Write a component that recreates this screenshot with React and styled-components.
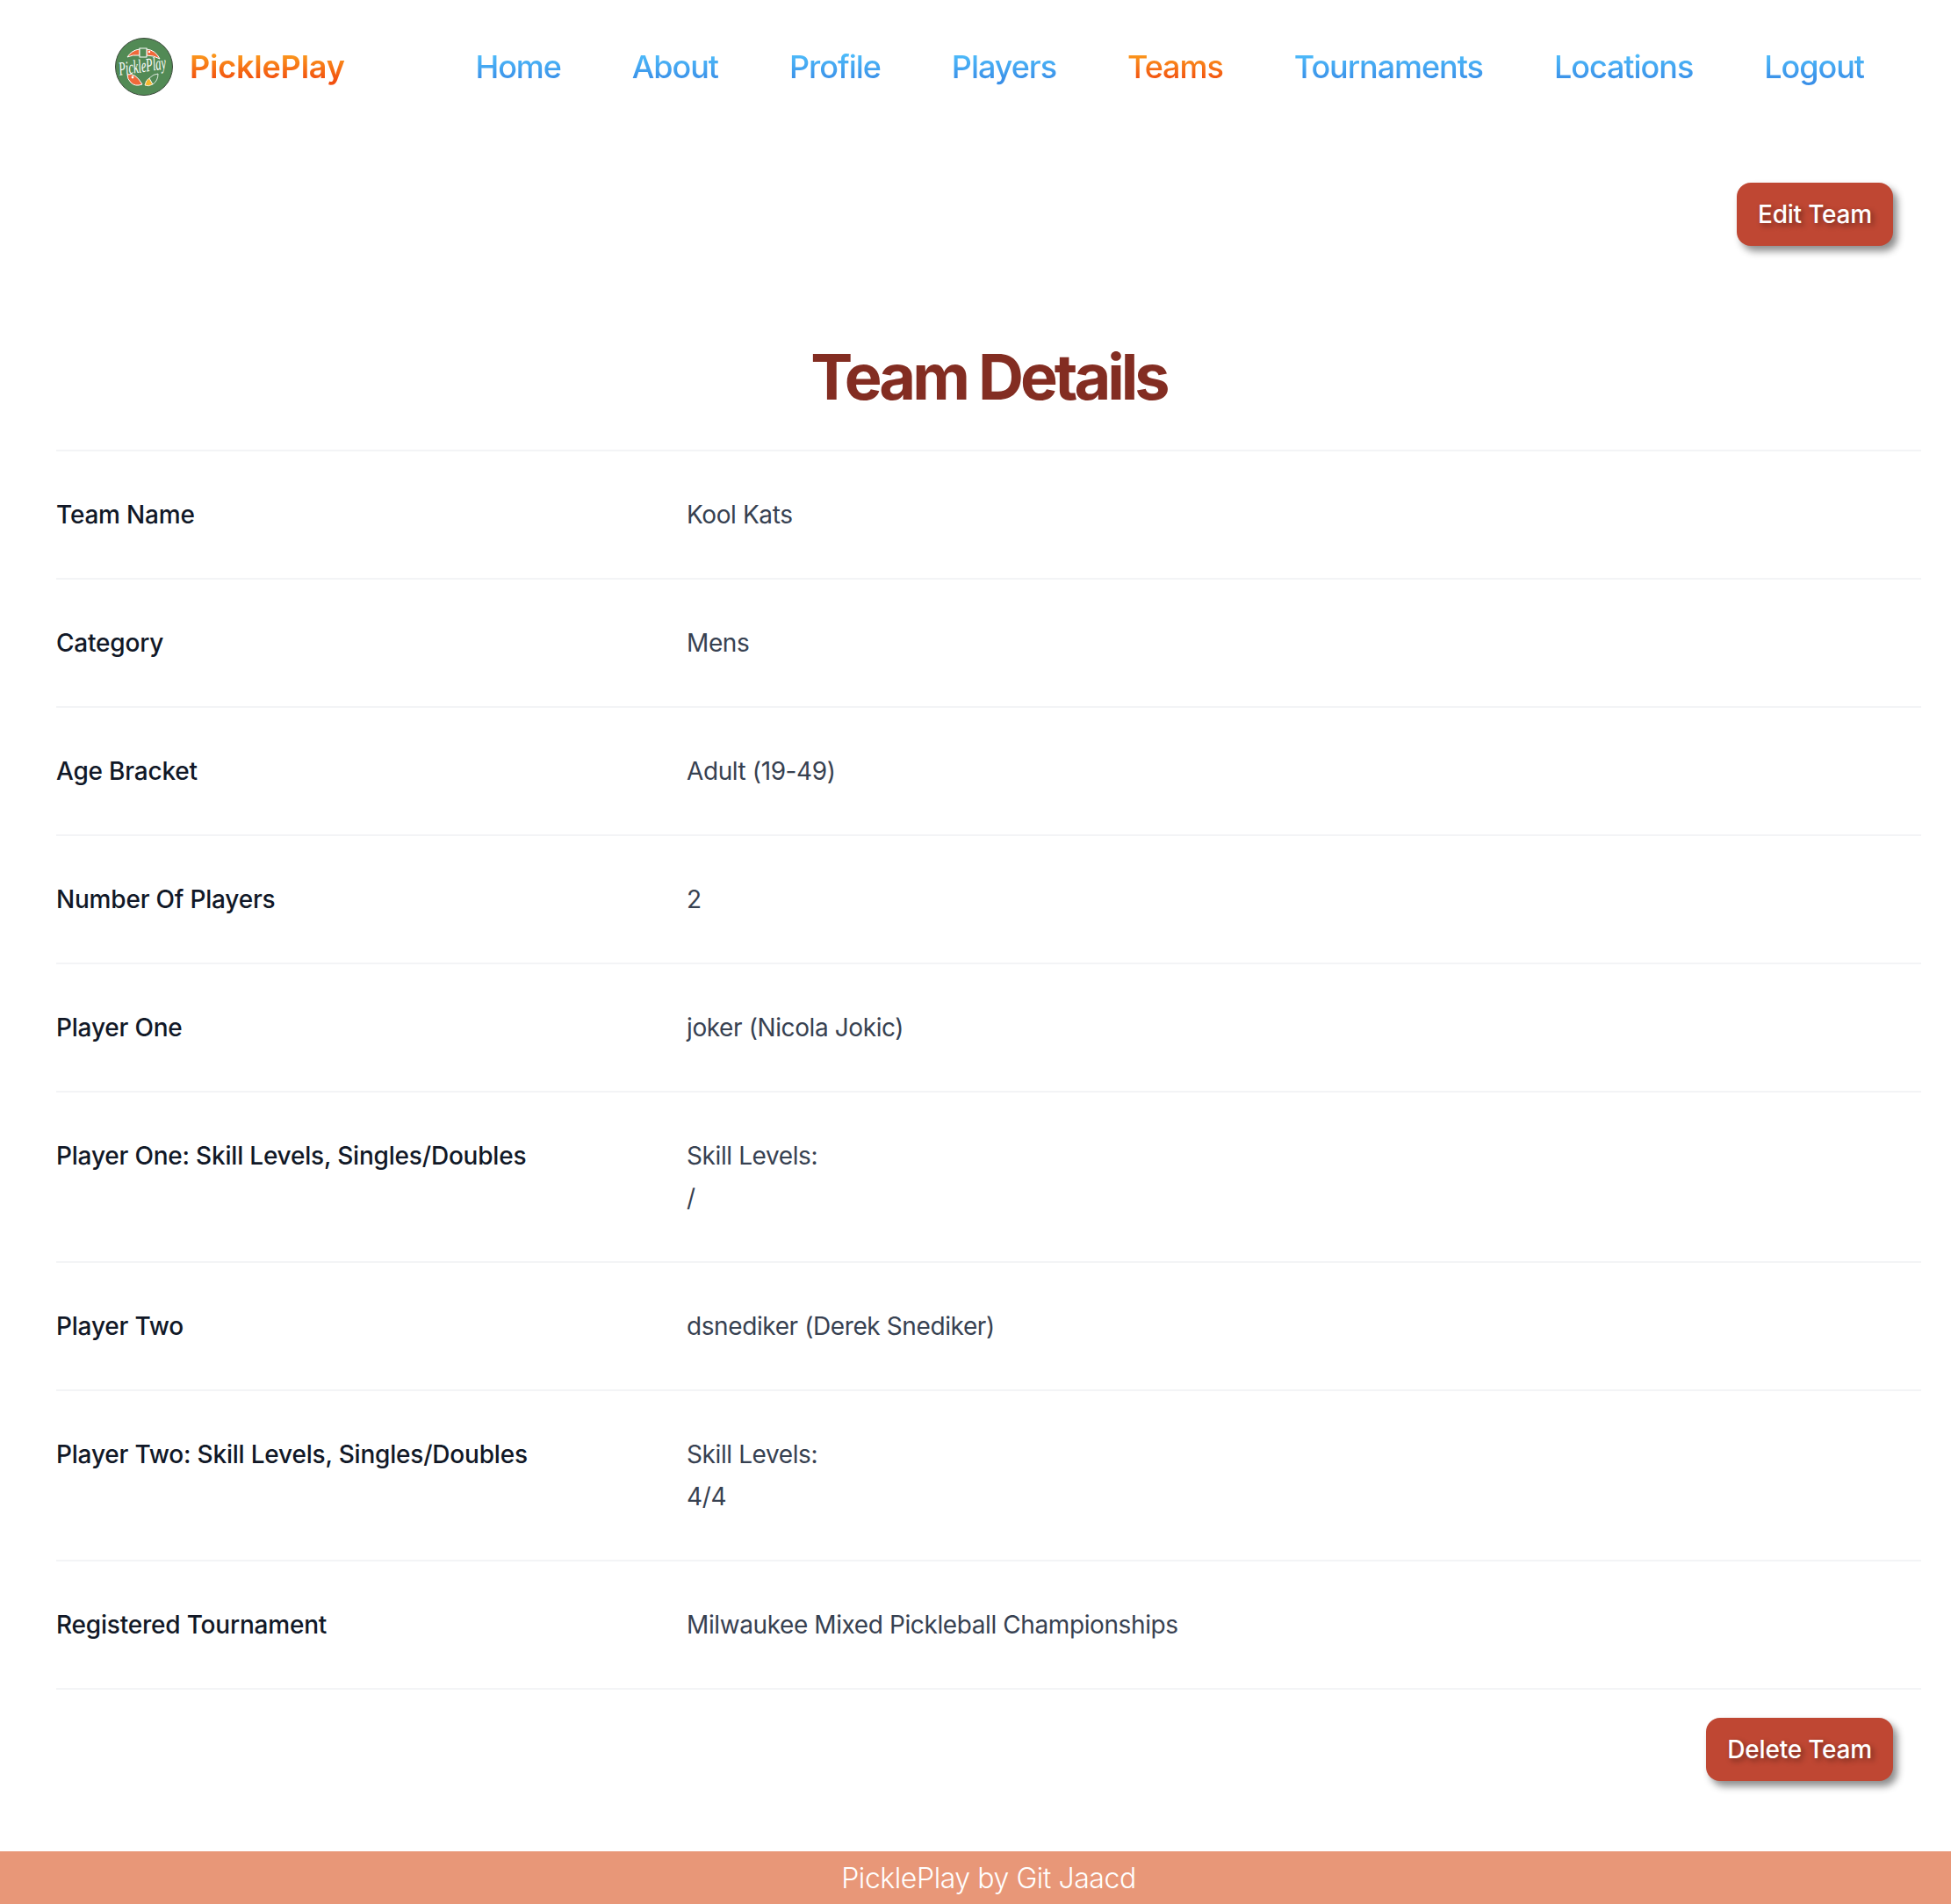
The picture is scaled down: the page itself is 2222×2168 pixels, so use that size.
import React from 'react';
import styled, { createGlobalStyle, css } from 'styled-components';

const GlobalStyle = createGlobalStyle`
	html, body {
		margin: 0;
		padding: 0;
		background: #fff;
		font-family: Inter, "Noto Sans", sans-serif;
	}
	* {
		box-sizing: border-box;
	}
`
const orangeText = css`
	background-image: linear-gradient(180deg, #fb9a1e 20%, #f2500f 80%);
	-webkit-background-clip: text;
	background-clip: text;
	color: transparent;
`
const blueText = css`
	background-image: linear-gradient(180deg, #4fbcfa 20%, #3a90e8 80%);
	-webkit-background-clip: text;
	background-clip: text;
	color: transparent;
`
//PAGE
const Page = styled.div`
	width: 2222px;
	height: 2168px;
	display: flex;
	flex-direction: column;
`
//NAV
const Nav = styled.nav`
	height: 152px;
	display: flex;
	align-items: center;
	padding: 0 99px 0 130px;
`
const Brand = styled.div`
	display: flex;
	align-items: center;
	gap: 18px;
	margin-right: auto;
`
const BrandName = styled.span`
	font-size: 36px;
	font-weight: 600;
	line-height: 48px;
	letter-spacing: -0.2px;
	${orangeText}
`
const NavLinks = styled.div`
	display: flex;
	gap: 81px;
`
const NavLink = styled.a`
	font-size: 36px;
	font-weight: 450;
	line-height: 48px;
	letter-spacing: -1.05px;
	${(p) => (p.$active ? orangeText : blueText)}
`
//ACTIONS
const Actions = styled.div`
	display: flex;
	justify-content: flex-end;
	padding: ${(p) => p.$top}px 66px 0 0;
`
const Button = styled.button`
	height: 72px;
	padding: 0 24px;
	border: none;
	border-radius: 16px;
	background: #bf4733;
	color: #fff;
	font-family: inherit;
	font-size: 28px;
	font-weight: 500;
	letter-spacing: -0.2px;
	text-shadow: 3px 3px 6px rgba(0, 0, 0, 0.4);
	box-shadow: 5px 6px 8px rgba(0, 0, 0, 0.45);
`
//HEADING
const Heading = styled.h1`
	margin: 0;
	padding: 109px 0 43px 30px;
	text-align: center;
	font-size: 72px;
	font-weight: 700;
	line-height: 80px;
	letter-spacing: -4px;
	color: #832d22;
`
//DETAILS
const Details = styled.div`
	margin: 0 34px 0 64px;
	border-top: 2px solid #f3f4f6;
`
const Row = styled.div`
	display: grid;
	grid-template-columns: 718px 1fr;
	padding: 48px 0;
	border-bottom: 2px solid #f3f4f6;
	font-size: 28px;
	line-height: 48px;
`
const Label = styled.div`
	font-weight: 500;
	letter-spacing: -0.2px;
	color: #111827;
`
const Value = styled.div`
	letter-spacing: -0.4px;
	color: #374151;
`
//FOOTER
const Footer = styled.footer`
	margin-top: auto;
	height: 60px;
	display: flex;
	align-items: center;
	justify-content: center;
	padding-left: 30px;
	background: #e89778;
	color: #fff;
	font-size: 32px;
	font-weight: 300;
	letter-spacing: -0.43px;
`
const LogoScript = styled.text`
	font-family: "Liberation Serif", serif;
	font-style: italic;
	font-size: 16px;
	fill: #fff;
`

const Logo = () => (
	<svg width="68" height="68" viewBox="0 0 68 68">
		<circle cx="34" cy="34" r="32.5" fill="#528a55" stroke="#3c4a3c" strokeWidth="1" />
		<path d="M15 23 Q20 15 29 14 L29 21 Q21 20 15 23 Z" fill="#f0693a" stroke="#fff" strokeWidth="1" />
		<path d="M37 14 Q47 15 52 25 Q45 21 37 21 Z" fill="#f0693a" stroke="#fff" strokeWidth="1" />
		<rect x="29" y="13" width="8" height="10" fill="#528a55" stroke="#fff" strokeWidth="1" />
		<circle cx="40" cy="17" r="1.2" fill="#fff" />
		<g transform="translate(33 40) rotate(-8) scale(0.78 1.35)">
			<LogoScript x="0" y="0" textAnchor="middle">PicklePlay</LogoScript>
		</g>
		<path d="M15 43 Q24 40 32 54 Q24 57 19 52 Q15 48 15 43 Z" fill="#f0693a" stroke="#fff" strokeWidth="1" />
		<circle cx="21" cy="46" r="1.4" fill="#fff" />
		<path d="M35 55 Q36 49 40 47 L44 54 Q39 57 35 55 Z" fill="#f5b82e" stroke="#fff" strokeWidth="0.8" />
		<path d="M40 47 Q45 42 50 42 Q50 50 44 54 Z" fill="#528a55" stroke="#fff" strokeWidth="0.8" />
	</svg>
)

const links = ['Home', 'About', 'Profile', 'Players', 'Teams', 'Tournaments', 'Locations', 'Logout'];

const rows = [
	['Team Name', ['Kool Kats']],
	['Category', ['Mens']],
	['Age Bracket', ['Adult (19-49)']],
	['Number Of Players', ['2']],
	['Player One', ['joker (Nicola Jokic)']],
	['Player One: Skill Levels, Singles/Doubles', ['Skill Levels:', '/']],
	['Player Two', ['dsnediker (Derek Snediker)']],
	['Player Two: Skill Levels, Singles/Doubles', ['Skill Levels:', '4/4']],
	['Registered Tournament', ['Milwaukee Mixed Pickleball Championships']],
];

const App = () => (
	<Page>
		<GlobalStyle />
		<Nav>
			<Brand>
				<Logo />
				<BrandName>PicklePlay</BrandName>
			</Brand>
			<NavLinks>
				{links.map((link) => (
					<NavLink key={link} $active={link === 'Teams'}>{link}</NavLink>
				))}
			</NavLinks>
		</Nav>
		<Actions $top={56}>
			<Button>Edit Team</Button>
		</Actions>
		<Heading>Team Details</Heading>
		<Details>
			{rows.map(([label, lines]) => (
				<Row key={label}>
					<Label>{label}</Label>
					<Value>
						{lines.map((line) => <div key={line}>{line}</div>)}
					</Value>
				</Row>
			))}
		</Details>
		<Actions $top={32}>
			<Button>Delete Team</Button>
		</Actions>
		<Footer>PicklePlay by Git Jaacd</Footer>
	</Page>
)

export default App;
